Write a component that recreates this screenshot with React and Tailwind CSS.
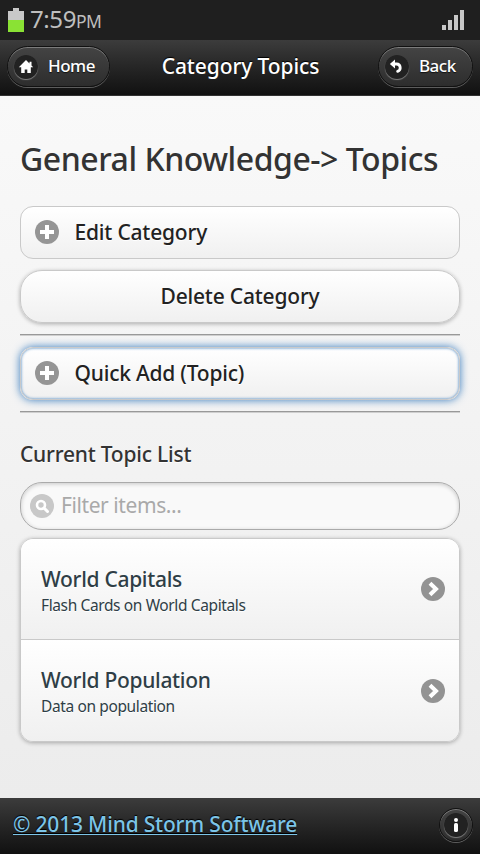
import React from 'react';

function PlusIcon() {
  return (
    <svg className="mb-[2px] size-6 shrink-0" viewBox="0 0 24 24">
      <circle cx="12" cy="12" r="12" fill="#959595" />
      <path d="M10 5h4v5h5v4h-5v5h-4v-5H5v-4h5z" fill="#fff" />
    </svg>
  );
}

function ArrowIcon() {
  return (
    <svg className="size-6 shrink-0" viewBox="0 0 24 24">
      <circle cx="12" cy="12" r="12" fill="#939393" />
      <path d="M9 6.2 15 12l-6 5.8" fill="none" stroke="#fff" strokeWidth="4" />
    </svg>
  );
}

function IconDisc({ children }) {
  return (
    <span className="flex size-6 shrink-0 items-center justify-center rounded-full bg-[#222] shadow-[0_1px_1px_rgba(255,255,255,0.4)]">
      {children}
    </span>
  );
}

function HeaderButton({ label, className, children }) {
  return (
    <button className={`flex h-[41px] items-center rounded-full border border-[#111] bg-linear-to-b from-[#444] to-[#2d2d2d] pl-[6px] shadow-[inset_0_1px_0_rgba(255,255,255,0.3),0_1px_0_rgba(255,255,255,0.3)] ${className}`}>
      <IconDisc>{children}</IconDisc>
      <span className="ml-[10px] pb-px text-[17px] leading-6 font-medium tracking-[-0.5px] whitespace-nowrap text-white [text-shadow:0_1px_1px_#111]">{label}</span>
    </button>
  );
}

function Topic({ title, detail, className }) {
  return (
    <li className={`flex items-center justify-between bg-linear-to-b from-white to-[#f0f0f0] pr-[14px] pl-5 ${className}`}>
      <div className="pt-[3px] whitespace-nowrap text-[#2f3e46] [text-shadow:0_1px_0_#fff]">
        <h3 className="text-[21px] leading-7 font-medium tracking-[-0.3px]">{title}</h3>
        <p className="text-[15.5px] leading-6 tracking-[-0.38px]">{detail}</p>
      </div>
      <ArrowIcon />
    </li>
  );
}

export default function App() {
  return (
    <div className="flex h-[854px] w-[480px] flex-col overflow-hidden bg-[#eee] font-['Noto_Sans','Open_Sans',sans-serif]">
      <div className="flex h-10 shrink-0 items-center bg-[#1f1f1f] pr-4 pl-2 text-[#bebebe]">
        <svg className="h-[26px] w-4" viewBox="0 0 16 26">
          <path d="M5 1h6v3h5v9H0V4h5z" fill="#c8c8c8" />
          <path d="M0 13h16v12H0z" fill="#8ae234" />
        </svg>
        <span className="ml-[6px] text-[24px] leading-8 tracking-[-0.4px]">7:59<span className="text-[17.5px] tracking-[-0.6px]">PM</span></span>
        <svg className="ml-auto h-5 w-[22px]" viewBox="0 0 22 20" fill="#c8c8c8">
          <path d="M0 15h4v5H0zM6 10h4v10H6zM12 5h4v15h-4zM18 0h4v20h-4z" />
        </svg>
      </div>
      <header className="flex h-14 shrink-0 items-center justify-between border-b border-[#333] bg-linear-to-b from-[#3c3c3c] to-[#111] px-[7px] pb-[2px]">
        <HeaderButton label="Home" className="w-[103px]">
          <svg className="h-4 w-4" viewBox="0 0 16 16" fill="#fff"><path d="M8 1 .8 8.3h2.4V14h3.5v-3.5h2.6V14h3.5V8.3h2.4l-1.7-1.8V2.8h-2v1.8z" /></svg>
        </HeaderButton>
        <h1 className="mr-[7px] pb-[2px] text-[21px] leading-7 font-medium tracking-[-0.1px] whitespace-nowrap text-white [text-shadow:0_-1px_1px_#000]">Category Topics</h1>
        <HeaderButton label="Back" className="w-[95px]">
          <svg className="size-4" viewBox="0 0 16 16"><path d="M4 5h3.6a3.8 3.8 0 0 1 1 7.4" fill="none" stroke="#fff" strokeWidth="2.8" strokeLinecap="round" /><path d="M.9 5 6 .6v8.8z" fill="#fff" /></svg>
        </HeaderButton>
      </header>
      <main className="flex h-[702px] shrink-0 flex-col bg-linear-to-b from-[#f9f9f9] to-[#ececec] px-5 text-[#333]">
        <h2 className="mt-[41px] h-11 text-[32px] leading-[44px] font-medium tracking-[-0.47px] whitespace-nowrap [text-shadow:0_1px_0_#fff]">General Knowledge-&gt; Topics</h2>
        <button className="mt-[25px] flex h-[53px] shrink-0 items-center rounded-[13px] border border-[#c9c9c9] bg-linear-to-b from-white to-[#f0f0f0] pl-[13.5px] text-[#222] [text-shadow:0_1px_0_#fff]">
          <PlusIcon />
          <span className="ml-4 pt-px text-[21px] font-medium tracking-[-0.2px]">Edit Category</span>
        </button>
        <button className="mt-[11px] flex h-[53px] shrink-0 items-center justify-center rounded-[22px] border border-[#c9c9c9] bg-linear-to-b from-white to-[#f0f0f0] text-[#222] shadow-[0_1px_4px_rgba(0,0,0,0.3)] [text-shadow:0_1px_0_#fff]">
          <span className="pt-px text-[21px] font-medium tracking-[-0.2px]">Delete Category</span>
        </button>
        <hr className="mt-[11px] h-[2px] shrink-0 border-0 border-t border-[#999] bg-[#cfcfcf]" />
        <button className="mt-[11px] flex h-[53px] shrink-0 items-center rounded-[13px] border border-[#c9c9c9] bg-linear-to-b from-white to-[#f0f0f0] pl-[13.5px] text-[#222] shadow-[inset_0_0_3px_#387bbe,0_0_9px_#387bbe] [text-shadow:0_1px_0_#fff]">
          <PlusIcon />
          <span className="ml-4 pt-px text-[21px] font-medium tracking-[-0.22px]">Quick Add (Topic)</span>
        </button>
        <hr className="mt-[11px] h-[2px] shrink-0 border-0 border-t border-[#999] bg-[#cfcfcf]" />
        <h3 className="mt-[27px] h-7 text-[21px] leading-7 font-medium tracking-[-0.23px] whitespace-nowrap [text-shadow:0_1px_0_#fff]">Current Topic List</h3>
        <div className="mt-[14px] flex h-12 shrink-0 items-center rounded-[22px] border border-[#aaa] bg-[#f9f9f9] pl-[9px] shadow-[inset_0_1px_4px_rgba(0,0,0,0.2)]">
          <svg className="size-6" viewBox="0 0 24 24"><circle cx="12" cy="12" r="12" fill="#c8c8c8" /><circle cx="11" cy="11" r="4" fill="none" stroke="#fff" strokeWidth="2.6" /><path d="m14 14 3.5 3.5" stroke="#fff" strokeWidth="3" strokeLinecap="round" /></svg>
          <span className="ml-[7px] text-[21px] tracking-[-0.42px] text-[#a9a9a9]">Filter items...</span>
        </div>
        <ul className="mt-2 flex h-[204px] shrink-0 flex-col overflow-hidden rounded-[13px] border border-[#c9c9c9] shadow-[0_1px_4px_rgba(0,0,0,0.3)]">
          <Topic title="World Capitals" detail="Flash Cards on World Capitals" className="h-[100px]" />
          <Topic title="World Population" detail="Data on population" className="h-[102px] border-t border-[#c9c9c9]" />
        </ul>
      </main>
      <footer className="flex h-14 shrink-0 items-center justify-between bg-linear-to-b from-[#3c3c3c] to-[#111] pr-[7px] pl-[13px]">
        <a className="pb-[4px] text-[21px] leading-7 font-medium tracking-[-0.19px] whitespace-nowrap text-[#7cc4e7] underline decoration-1 underline-offset-2 [text-shadow:0_-1px_1px_#000]">© 2013 Mind Storm Software</a>
        <button className="mb-[2px] flex size-[34px] items-center justify-center rounded-full border border-[#111] bg-linear-to-b from-[#444] to-[#2d2d2d] shadow-[inset_0_1px_0_rgba(255,255,255,0.3),0_1px_0_rgba(255,255,255,0.3)]">
          <IconDisc><svg className="size-4" viewBox="0 0 16 16" fill="#fff"><circle cx="8" cy="3" r="2" /><rect x="6" y="6" width="4" height="9" rx="1.6" /></svg></IconDisc>
        </button>
      </footer>
    </div>
  );
}
